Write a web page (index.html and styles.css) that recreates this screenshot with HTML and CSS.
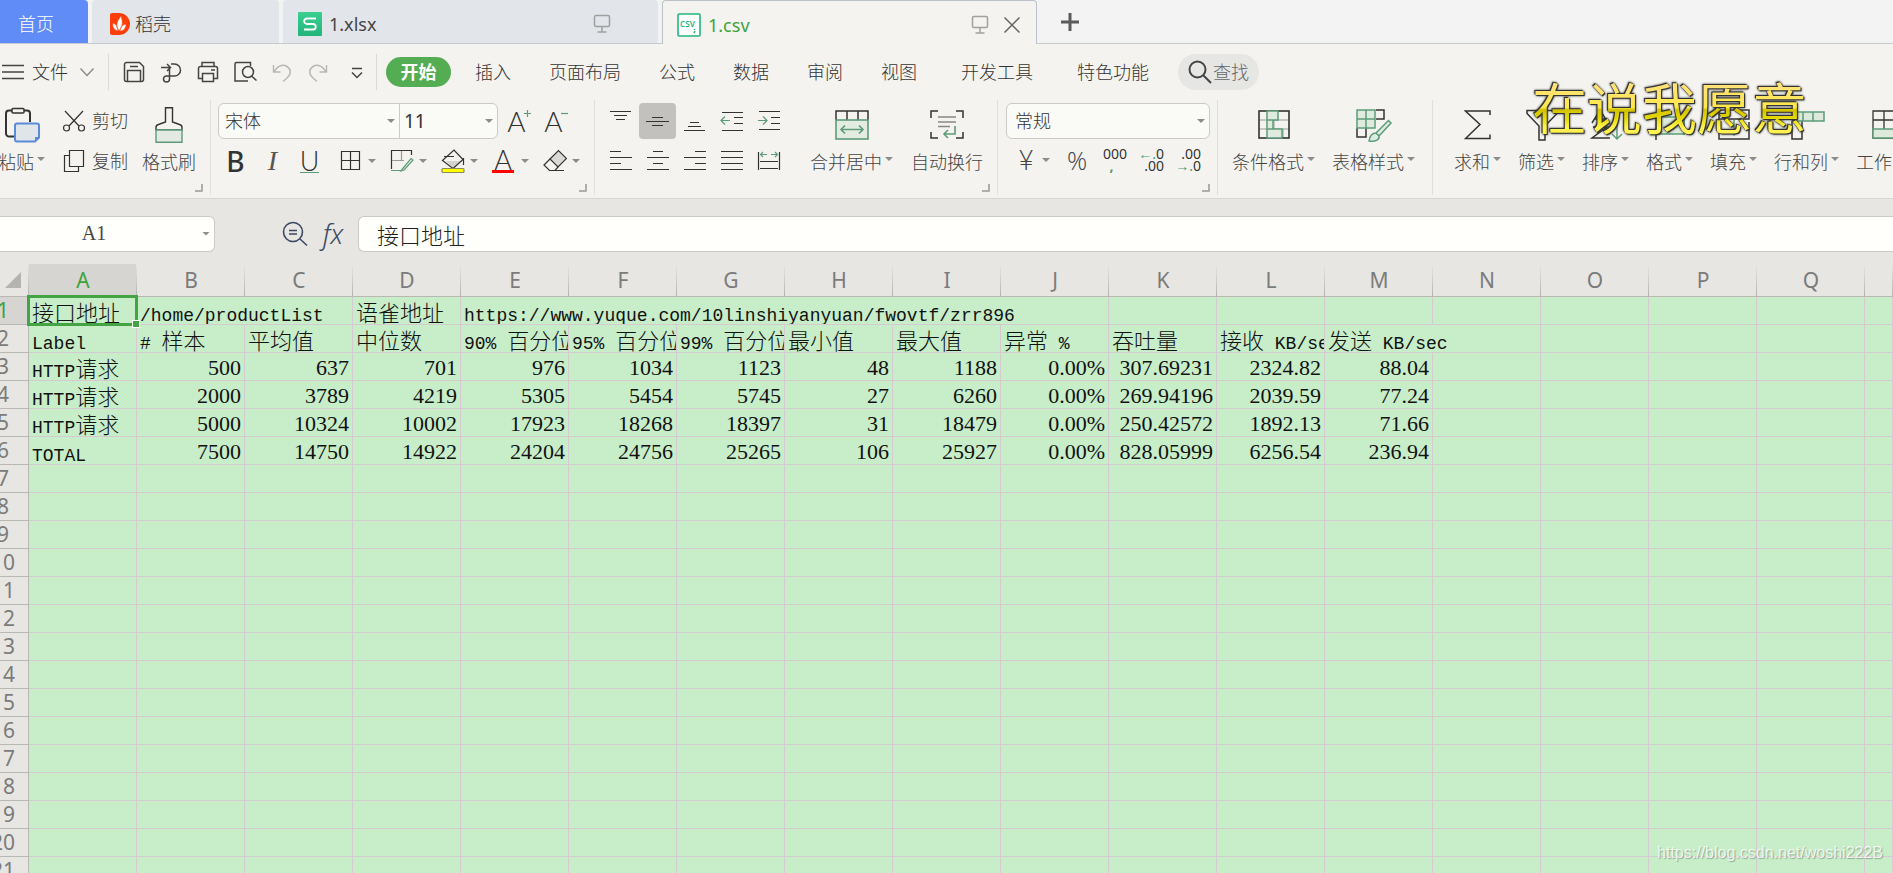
FILE: index.html
```html
<!DOCTYPE html>
<html lang="zh-CN">
<head>
<meta charset="utf-8">
<title>1.csv</title>
<link rel="stylesheet" href="styles.css">
</head>
<body>
<nav class="tabs">
  <button class="tab tab-home">首页</button>
  <button class="tab tab-docer">
    <svg width="20" height="24" viewBox="0 0 20 24"><path d="M0 3a2 2 0 0 1 2-2h7a11 11 0 0 1 0 22H2a2 2 0 0 1-2-2z" fill="#ff3f0a"/><path d="M9 19C5 14 7 9 11 4c2 6 2 10-2 15zM8 19c-4-1-6-4-5-8 3 1 5 4 5 8zM10 19c0-4 2-6 6-7 0 4-2 7-6 7z" fill="#fff" stroke="#ff3f0a" stroke-width=".6"/></svg>
    <span>稻壳</span>
  </button>
  <button class="tab tab-file">
    <svg width="24" height="24" viewBox="0 0 24 24"><defs><linearGradient id="gs" x2="0" y2="1"><stop stop-color="#3bcf92"/><stop offset="1" stop-color="#22b478"/></linearGradient></defs><rect width="24" height="24" rx="1" fill="url(#gs)"/><path d="M18 6.500H9a2.700 2.700 0 0 0 0 5.500h6a2.700 2.700 0 0 1 0 5.500H6" fill="none" stroke="#fff" stroke-width="1.800"/></svg>
    <span>1.xlsx</span>
    <svg class="screen" width="18" height="20" viewBox="0 0 18 20"><rect x="1.500" y="1.500" width="15" height="11" rx="1.500"/><path d="M9 13v5M4.500 18h9"/></svg>
  </button>
  <div class="tab tab-file tab-active">
    <svg width="24" height="24" viewBox="0 0 24 24"><rect x="1" y="1" width="22" height="22" rx="1" fill="#fff" stroke="#1fb87c" stroke-width="1.600"/><text x="3" y="14" class="csv-mark">csv</text><path d="M17.500 16v1M18 18l-1 2" stroke="#1fb87c" stroke-width="1.600"/></svg>
    <span>1.csv</span>
    <svg class="screen" width="18" height="20" viewBox="0 0 18 20"><rect x="1.500" y="1.500" width="15" height="11" rx="1.500"/><path d="M9 13v5M4.500 18h9"/></svg>
    <button class="close" aria-label="关闭"><svg width="18" height="18" viewBox="0 0 18 18"><path d="M1.500 1.500l15 15M16.500 1.500l-15 15" stroke="#666" stroke-width="1.500"/></svg></button>
  </div>
  <button class="tab-add" aria-label="新建"><svg width="18" height="18" viewBox="0 0 18 18"><path d="M9 0v18M0 9h18" stroke="#5b5b5b" stroke-width="3"/></svg></button>
</nav>

<div class="menu">
  <button class="file-btn">
    <svg width="24" height="18" viewBox="0 0 24 18"><path d="M2 2.500h22M2 9h22M2 15.500h22" stroke="#444" stroke-width="1.500"/></svg>
    <span>文件</span>
    <svg width="14" height="10" viewBox="0 0 14 10"><path d="M.5 1.500l6.500 7 6.500-7" stroke="#888" stroke-width="1.300" fill="none"/></svg>
  </button>
  <div class="quick">
    <button aria-label="保存"><svg width="24" height="24" viewBox="0 0 24 24"><path d="M2.500 4.500a2 2 0 0 1 2-2h13l4 4v13a2 2 0 0 1-2 2h-15a2 2 0 0 1-2-2zM5.500 21.500v-11h13v11M8 6.500h8"/></svg></button>
    <button aria-label="输出为PDF"><svg width="24" height="24" viewBox="0 0 24 24"><path d="M2 7.500h9M8 4l3.500 3.500L8 11M12 4h3.500a6 6 0 0 1 0 12H7.500a3 3 0 1 0 3 3V9"/></svg></button>
    <button aria-label="打印"><svg width="24" height="24" viewBox="0 0 24 24"><path d="M6 6.500v-4h12v4M6 18.500H2.500v-10a2 2 0 0 1 2-2h15a2 2 0 0 1 2 2v10H18M6.500 13.500h11v8h-11zM15 10h4"/></svg></button>
    <button aria-label="打印预览"><svg width="24" height="24" viewBox="0 0 24 24"><path d="M17.500 6V2.500h-14a1.500 1.500 0 0 0-1.500 1.500v17h13"/><circle cx="15" cy="12" r="5.500"/><path d="M18.500 16l5 4.500"/></svg></button>
    <button class="dim" aria-label="撤销"><svg width="24" height="24" viewBox="0 0 24 24"><path d="M3.500 5v7h7M4 12C8 5 13 4 17 6.500s4.500 7 .5 11L13 21.500"/></svg></button>
    <button class="dim" aria-label="恢复"><svg width="24" height="24" viewBox="0 0 24 24"><path d="M20.500 5v7h-7M20 12C16 5 11 4 7 6.500s-4.500 7-.5 11l4.500 4"/></svg></button>
    <button class="more" aria-label="更多"><svg width="24" height="24" viewBox="0 0 24 24"><path d="M7 8.500h10M7 12.500l5 5 5-5"/></svg></button>
  </div>
  <button class="menu-on">开始</button>
  <div class="menu-items">
    <button>插入</button><button>页面布局</button><button>公式</button><button>数据</button><button>审阅</button><button>视图</button><button class="wide">开发工具</button><button class="wide">特色功能</button>
  </div>
  <button class="find"><svg width="24" height="24" viewBox="0 0 24 24"><circle cx="9.500" cy="9.500" r="8" fill="none" stroke="#444" stroke-width="2"/><path d="M15.500 15.500l7.500 7.500" stroke="#444" stroke-width="2"/></svg><span>查找</span></button>
</div>

<div class="ribbon">
  <section class="group g-clip">
    <button class="big"><svg width="36" height="36" viewBox="0 0 36 36"><path d="M8 3.500H5a3 3 0 0 0-3 3v20a3 3 0 0 0 3 3h6M20 3.500h3a3 3 0 0 1 3 3V15" stroke="#333" stroke-width="2"/><rect x="8" y="1.500" width="12" height="4.500" rx="1" stroke="#333" stroke-width="1.500"/><path d="M13 16.500h20a2 2 0 0 1 2 2v12l-4 4H13a2 2 0 0 1-2-2v-14a2 2 0 0 1 2-2z" fill="#e0e5ea" stroke="#5a8bd8" stroke-width="2"/><path d="M35 30h-4v4z" fill="#5a8bd8"/></svg><span class="cap">粘贴<i class="caret"></i></span></button>
    <div class="stack">
      <button class="line"><svg width="24" height="24" viewBox="0 0 24 24"><circle cx="4.500" cy="19" r="3"/><circle cx="19.500" cy="19" r="3"/><path d="M3 2l14 15M21 2L7 17"/></svg>剪切</button>
      <button class="line"><svg width="24" height="24" viewBox="0 0 24 24"><path d="M7.500 1.500h14v16h-14zM7 6.500H2.500v16h14V18"/></svg>复制</button>
    </div>
    <button class="big"><svg width="28" height="36" viewBox="0 0 28 36"><path d="M10.500 15V.8h7V15l7 2.500a3 3 0 0 1 2.500 3V23H1v-2.500a3 3 0 0 1 2.500-3z" stroke="#333" stroke-width="1.400"/><path d="M1 23v12.200h26V23z" fill="#e4e9e3" stroke="#5c9c78" stroke-width="1.400"/></svg><span class="cap">格式刷</span></button>
    <svg class="corner" width="8" height="8"><path d="M7 0v7H0"/></svg>
  </section>

  <section class="group g-font">
    <div class="stack">
      <div class="row">
        <div class="combos">
          <label class="combo font-name"><select aria-label="字体"><option>宋体</option></select><i class="caret"></i></label>
          <label class="combo font-size"><select aria-label="字号"><option>11</option></select><i class="caret"></i></label>
        </div>
        <button class="tool grow" aria-label="增大字号"><span class="thin">A</span><svg width="8" height="22" viewBox="0 0 8 22"><path d="M0 3.500h7M3.500 0v7" class="gr"/></svg></button>
        <button class="tool grow" aria-label="减小字号"><span class="thin">A</span><svg width="8" height="22" viewBox="0 0 8 22"><path d="M0 3.500h7" class="gr"/></svg></button>
      </div>
      <div class="row">
        <button class="tool bold">B</button>
        <button class="tool italic">I</button>
        <button class="tool under"><span>U</span></button>
        <div class="splits">
          <button class="split" aria-label="边框"><svg width="24" height="24" viewBox="0 0 24 24"><path d="M2.500 2.500h18v18h-18zM11.500 2.500v18M2.500 11.500h18"/></svg><i class="caret"></i></button>
          <button class="split" aria-label="绘图边框"><svg width="24" height="24" viewBox="0 0 24 24"><path d="M1.500 20V1.500h20V6"/><path d="M11.500 2v10M2 11.500h12" class="pale"/><path d="M1 21.500h11M12 20.500l9-11 2 1.500-9 10-3 1z" class="gr"/></svg><i class="caret"></i></button>
          <button class="split" aria-label="填充颜色"><svg width="24" height="24" viewBox="0 0 24 24"><path d="M5 12h16l-8 8z" fill="#d5d3cf" stroke="none"/><path d="M1.500 11.500L13 1l9 9.500L12 19.500zM3 7.500h10M22.500 9v7"/><rect x="1" y="19.500" width="22" height="4" rx="1" fill="#ff0" stroke="#8b8b5e"/></svg><i class="caret"></i></button>
          <button class="split" aria-label="字体颜色"><span class="ink">A</span><i class="caret"></i></button>
          <button class="split" aria-label="清除"><svg width="24" height="24" viewBox="0 0 24 24"><path d="M7 10l8.500-8.500 8 8L15 18z" fill="#dcdad6"/><path d="M7 10l-6 6 5.500 5.500H12L15 18M6 21.500h15"/></svg><i class="caret"></i></button>
        </div>
      </div>
    </div>
    <svg class="corner" width="8" height="8"><path d="M7 0v7H0"/></svg>
  </section>

  <section class="group g-align">
    <div class="stack">
      <div class="row">
        <button class="tool" aria-label="顶端对齐"><svg width="24" height="24" viewBox="0 0 24 24"><path d="M1 2.500h21M5 6.500h13M7 10.500h9"/></svg></button>
        <button class="tool on" aria-label="垂直居中"><svg width="24" height="24" viewBox="0 0 24 24"><path d="M6 8.500h11M0 12.500h23M6 16.500h11"/></svg></button>
        <button class="tool" aria-label="底端对齐"><svg width="24" height="24" viewBox="0 0 24 24"><path d="M7 13.500h9M5 17.500h13M1 21.500h21"/></svg></button>
        <button class="tool" aria-label="减少缩进"><svg width="24" height="24" viewBox="0 0 24 24"><path d="M2 3.500h21M14 8.500h9M14 14.500h9M2 21.500h21"/><path d="M1 11.500h9M5 7.500l-4 4 4 4" class="gr"/></svg></button>
        <button class="tool" aria-label="增加缩进"><svg width="24" height="24" viewBox="0 0 24 24"><path d="M2 2.500h21M14 8.500h9M14 14.500h9M2 20.500h21"/><path d="M1 11.500h9M6 7.500l4 4-4 4" class="gr"/></svg></button>
      </div>
      <div class="row">
        <button class="tool" aria-label="左对齐"><svg width="24" height="24" viewBox="0 0 24 24"><path d="M1 2.500h11M1 8.500h22M1 14.500h11M1 20.500h22"/></svg></button>
        <button class="tool" aria-label="居中"><svg width="24" height="24" viewBox="0 0 24 24"><path d="M7 2.500h10M1 8.500h22M7 14.500h10M1 20.500h22"/></svg></button>
        <button class="tool" aria-label="右对齐"><svg width="24" height="24" viewBox="0 0 24 24"><path d="M12 2.500h11M1 8.500h22M12 14.500h11M1 20.500h22"/></svg></button>
        <button class="tool" aria-label="两端对齐"><svg width="24" height="24" viewBox="0 0 24 24"><path d="M1 2.500h22M1 8.500h22M1 14.500h22M1 20.500h22"/></svg></button>
        <button class="tool" aria-label="分散对齐"><svg width="24" height="24" viewBox="0 0 24 24"><path d="M1.500 3v18M22.500 3v18M3 12.500h18M3 19.500h18"/><path d="M4 5.500h6M6 3L3.500 5.500 6 8M14 5.500h6M18 3l2.500 2.500L18 8" class="gr"/></svg></button>
      </div>
    </div>
    <button class="big"><svg width="36" height="32" viewBox="0 0 36 32"><path d="M2 11V2h32v9M13 2v9M24 2v9" stroke="#333" stroke-width="1.500"/><rect x="2" y="11" width="32" height="19" fill="#e4ece2" stroke="#5c9c78" stroke-width="1.600"/><path d="M7 20.500h22M11 16.500l-4 4 4 4M25 16.500l4 4-4 4" stroke="#5c9c78" stroke-width="1.600"/></svg><span class="cap">合并居中<i class="caret"></i></span></button>
    <button class="big"><svg width="36" height="32" viewBox="0 0 36 32"><path d="M2 9V2h7M27 2h7v7M2 23v6h7M27 29h7v-6" stroke="#333" stroke-width="1.500"/><path d="M9 8h18M9 13h18M9 17.500h12" stroke="#888" stroke-width="1.500"/><path d="M26 17v8H15M19 21l-4 4 4 4" stroke="#5c9c78" stroke-width="1.600"/></svg><span class="cap">自动换行</span></button>
    <svg class="corner" width="8" height="8"><path d="M7 0v7H0"/></svg>
  </section>

  <section class="group g-num">
    <div class="stack">
      <div class="combos"><label class="combo num-format"><select aria-label="数字格式"><option>常规</option></select><i class="caret"></i></label></div>
      <div class="row">
        <button class="split money"><span>¥</span><i class="caret"></i></button>
        <button class="tool pct">%</button>
        <button class="tool digits" aria-label="千位分隔样式"><span>000</span><b>,</b></button>
        <button class="tool digits" aria-label="增加小数位数"><span><b>←.</b>0</span><span>.00</span></button>
        <button class="tool digits" aria-label="减少小数位数"><span>.00</span><span><b>→.</b>0</span></button>
      </div>
    </div>
    <svg class="corner" width="8" height="8"><path d="M7 0v7H0"/></svg>
  </section>

  <section class="group g-style">
    <button class="big"><svg width="34" height="32" viewBox="0 0 34 32"><path d="M2 11h30M2 20h30M17 2v27M26 20v9" stroke="#999"/><rect x="2" y="2" width="30" height="27" stroke="#333" stroke-width="1.600"/><path d="M10 2h11v9H10zM10 11h6v9h-6zM10 20h15v9H10z" fill="#e0ebdf" stroke="#5c9c78" stroke-width="1.500"/></svg><span class="cap">条件格式<i class="caret"></i></span></button>
    <button class="big"><svg width="38" height="36" viewBox="0 0 38 36"><path d="M21 3h8v9h-8M2 21v9h9v-9" stroke="#333" stroke-width="1.500"/><path d="M2 3h18v18H2zM11 3v18M2 12h18" fill="#e0ebdf" stroke="#5c9c78" stroke-width="1.500"/><path d="M21 26l12.500-12.500 2.500 2.500L24 29M14 34c1-6 3-8 7-8l3 3c1 4-4 6-10 5z" fill="#e0ebdf" stroke="#5c9c78" stroke-width="1.500"/></svg><span class="cap">表格样式<i class="caret"></i></span></button>
  </section>

  <section class="group g-edit">
    <button class="big"><svg width="28" height="32" viewBox="0 0 28 32"><path d="M26 6V2H1.500L16 15.500 1.500 29.500H26v-4" stroke="#333" stroke-width="1.500"/></svg><span class="cap">求和<i class="caret"></i></span></button>
    <button class="big"><svg width="34" height="34" viewBox="0 0 34 34"><path d="M2 2.500h30v3L20 18v14h-6V18L2 5.500z" stroke="#333" stroke-width="1.500"/></svg><span class="cap">筛选<i class="caret"></i></span></button>
    <button class="big"><svg width="34" height="34" viewBox="0 0 34 34"><path d="M3 15L11 2l8 13M6 11h10M4 19h14L3 30h18" stroke="#333" stroke-width="1.500"/><path d="M28 2v29M23 26l5 5 5-5" stroke="#5c9c78" stroke-width="1.500"/></svg><span class="cap">排序<i class="caret"></i></span></button>
    <button class="big"><svg width="34" height="34" viewBox="0 0 34 34"><path d="M3 5v27M31 5v22" stroke="#333" stroke-width="1.500"/><path d="M3 9h28v17H3z" fill="#dce9db" stroke="#5c9c78" stroke-width="1.500"/></svg><span class="cap">格式<i class="caret"></i></span></button>
    <button class="big"><svg width="34" height="34" viewBox="0 0 34 34"><path d="M2 2h30v9H2zM2 14v17h30V14" stroke="#333" stroke-width="1.500"/><path d="M17 12v15M12 22l5 5 5-5" stroke="#5c9c78" stroke-width="1.500"/></svg><span class="cap">填充<i class="caret"></i></span></button>
    <button class="big"><svg width="36" height="34" viewBox="0 0 36 34"><path d="M3 13v18h10V13" stroke="#333" stroke-width="1.500"/><path d="M3 4h32v9H3zM14 4v9M24 4v9" fill="#dce9db" stroke="#5c9c78" stroke-width="1.500"/></svg><span class="cap">行和列<i class="caret"></i></span></button>
    <button class="big"><svg width="36" height="32" viewBox="0 0 36 32"><path d="M2 2h32v27H2zM13 2v18M24 2v18M2 11h32" stroke="#333" stroke-width="1.300"/><path d="M2 20h32v9H2z" fill="#dce9db" stroke="#5c9c78" stroke-width="1.500"/></svg><span class="cap">工作表<i class="caret"></i></span></button>
  </section>
</div>

<div class="formula">
  <label class="name-box"><input aria-label="名称框" value="A1"><i class="caret"></i></label>
  <button class="lens" aria-label="浏览公式"><svg width="26" height="26" viewBox="0 0 26 26"><circle cx="11" cy="11" r="9.500" fill="none" stroke="#3d4963" stroke-width="1.600"/><path d="M18 18l7 6.500M7 9.500h8M7 13h8" stroke="#3d4963" stroke-width="1.600"/></svg></button>
  <button class="fx">fx</button>
  <input class="entry" aria-label="编辑栏" value="接口地址">
</div>

<main class="sheet"><table class="grid" id="grid"></table></main>

<div class="caption">在说我愿意</div>
<div class="mark">https://blog.csdn.net/woshi222B</div>
<script src="script.js"></script>
</body>
</html>
```
FILE: styles.css
```css
* { box-sizing: border-box; }
body {
  margin: 0;
  height: 100vh;
  overflow: hidden;
  position: relative;
  display: flex;
  flex-direction: column;
  background: #f4f3ef;
  color: #333;
  font: 300 18px/24px "Noto Sans", "Noto Sans CJK SC", sans-serif;
}
button, input, select { font: inherit; color: inherit; border: 0; background: none; padding: 0; margin: 0; }
button { display: flex; align-items: center; justify-content: center; white-space: nowrap; flex: none; }
svg { display: block; flex: none; fill: none; }

/* document tabs */
.tabs { display: flex; height: 44px; flex: none; gap: 4px; background: #f3f3f3; border-bottom: 1px solid #c5cad0; }
.tab { display: flex; align-items: center; justify-content: flex-start; height: 43px; border-radius: 4px 4px 0 0; background: #e2e5ea; padding: 5px 15px 0; }
.tab-home { width: 88px; background: #5f8cf6; color: #fff; padding-left: 18px; border-radius: 0 4px 0 0; }
.tab-docer { width: 187px; padding-left: 18px; gap: 5px; }
.tab-file { width: 375px; gap: 7px; font-weight: 400; color: #444; }
.screen { margin-left: auto; margin-right: 32px; stroke: #a0a0a0; stroke-width: 1.5px; }
.tab-active { height: 44px; background: #f4f3ef; color: #3ea33e; border: 1px solid #bcc2cc; border-bottom: 0; padding-left: 14px; padding-top: 4px; }
.tab-active .screen { margin-right: 7px; }
.csv-mark { font: 500 10px "Noto Sans", sans-serif; fill: #1fb87c; }
.tab-add { width: 58px; height: 43px; padding-bottom: 0; }

/* menu row */
.menu { display: flex; align-items: center; height: 56px; flex: none; }
.file-btn { gap: 8px; width: 109px; height: 36px; border-right: 1px solid #dcdbd8; justify-content: flex-start; }
.file-btn svg + span { margin-right: 4px; }
.quick { display: flex; gap: 13px; padding: 0 7px 0 13px; height: 36px; border-right: 1px solid #dcdbd8; align-items: center; }
.quick svg { stroke: #444; stroke-width: 1.5px; }
.quick .dim svg { stroke: #b8b8b6; }
.quick .dim + .dim { margin-left: -1px; }
.quick .more { margin-left: 2px; }
.menu-on { width: 65px; height: 30px; border-radius: 15px; background: #54ad53; color: #fff; font-weight: 700; margin-left: 9px; }
.menu-items { display: flex; gap: 38px; margin-left: 24px; }
.menu-items .wide { margin-left: 6px; }
.find { width: 81px; height: 36px; border-radius: 18px; background: #e6e6e4; margin-left: 29px; gap: 1px; color: #666; }

/* ribbon */
.ribbon { display: flex; height: 99px; flex: none; border-bottom: 1px solid #d6d6d2; overflow: hidden; color: #444; }
.group { display: flex; flex: none; position: relative; height: 95px; padding-top: 3px; border-right: 1px solid #e0dfdc; }
.g-clip { margin-left: -2px; padding-right: 14px; }
.g-font { padding-left: 6px; }
.g-align { padding-left: 7px; padding-right: 14px; }
.g-num { padding-left: 7px; padding-right: 7px; }
.g-style { padding-left: 14px; padding-right: 17px; gap: 17px; }
.g-edit { padding-left: 21px; gap: 17px; border-right: 0; }
.big { flex-direction: column; height: 74px; }
.big > svg { margin: auto; }
.cap { display: flex; height: 30px; align-items: center; gap: 3px; }
.caret { flex: none; width: 8px; height: 4px; background: #8c8c8c; clip-path: polygon(0 0, 100% 0, 50% 100%); }
.cap .caret { margin-bottom: 6px; }
.stack { display: flex; flex-direction: column; gap: 4px; }
.g-clip .stack { margin: 0 14px 0 17px; }
.line { height: 36px; gap: 6px; }
.line svg, .tool svg, .split svg { stroke: #333; stroke-width: 1.2px; }
svg .gr { stroke: #5c9c78; }
svg .pale { stroke: #999; }
.corner { position: absolute; right: 7px; top: 84px; stroke: #999; stroke-width: 1.5px; }
.row { display: flex; height: 36px; align-items: center; }
.combos { display: flex; height: 36px; border: 1px solid #cbcac6; border-radius: 6px; background: #fafaf7; margin-left: 1px; }
.combo { display: flex; align-items: center; padding-right: 4px; }
.combo select { appearance: none; flex: 1; min-width: 0; height: 32px; padding-left: 6px; outline: 0; color: #333; }
.font-name { width: 181px; border-right: 1px solid #cbcac6; }
.font-size { width: 97px; }
.font-size select { padding-left: 4px; font-size: 19px; font-weight: 400; }
.num-format { width: 202px; }
.num-format select { padding-left: 8px; }
.tool { width: 37px; height: 36px; border-radius: 4px; }
.on { background: #c3c1bd; }
.combos + .grow { margin-left: 3px; }
.thin, .ink { font: 300 28px/32px Lato, "Open Sans", sans-serif; color: #333; }
.grow svg { margin-left: -2px; }
.thin { font-size: 28px; }
.bold { font: 500 28px/36px "Noto Sans", sans-serif; color: #333; }
.italic { font: italic 300 28px/36px "Liberation Serif", serif; color: #555; }
.under { font: 300 27px/23px Lato, sans-serif; color: #333; }
.under span { border-bottom: 1px solid #5c9c78; }
.splits { display: flex; margin-left: 11px; }
.split { width: 51px; gap: 5px; justify-content: flex-start; }
.ink { width: 22px; height: 24px; margin-right: 2px; line-height: 22px; font-size: 27px; border-bottom: 3px solid #f00; }
.g-align .big { margin-left: 18px; }
.g-align .stack + .big { margin-left: 23px; }
.g-num .row { height: 34px; }
.money { width: 43px; margin-left: 10px; gap: 5px; }
.money span { font: 300 27px/36px Lato, "Noto Sans", sans-serif; width: 22px; }
.pct { width: 38px; font: 300 25px/36px "Open Sans", sans-serif; }
.digits { width: 37px; flex-direction: column; align-items: flex-end; font: 400 14px/12px "Noto Sans", sans-serif; color: #333; padding-right: 6px; }
.digits b { color: #4c9a6c; font-weight: 400; }
.digits > b { align-self: center; font-weight: 700; }

/* formula bar */
.formula { display: flex; align-items: center; height: 65px; flex: none; background: #e7e6e2; padding-top: 4px; color: #222; }
.name-box { display: flex; align-items: center; width: 215px; height: 36px; background: #fffffc; border: 1px solid #cbcac6; border-left: 0; border-radius: 0 6px 6px 0; padding-right: 4px; }
.name-box input { flex: 1; min-width: 0; text-align: center; padding-right: 14px; font: 20px "Liberation Serif", serif; color: #444; }
.lens { margin-left: 67px; }
.fx { width: 50px; font: italic 300 27px/36px "Noto Sans", sans-serif; color: #3d4963; }
.entry { flex: 1; min-width: 0; height: 36px; background: #fffffc; border: 1px solid #cbcac6; border-right: 0; border-radius: 6px 0 0 6px; padding-left: 18px; font-size: 22px; }

/* sheet, scrolled so that the row numbers are partly out of view */
.sheet { flex: 1; min-height: 0; overflow: hidden; background: #c7edc9; }
.grid { table-layout: fixed; width: calc(100% + 20px); margin-left: -20px; border-collapse: separate; border-spacing: 0; color: #111; }
.col-head { width: 49px; }
.col { width: 108px; }
.grid th { height: 28px; padding: 0; font: 400 21px/27px "Noto Sans", sans-serif; color: #7b7b7b; background: #e7e6e2; border-right: 1px solid #b9b8b5; border-bottom: 1px solid #b9b8b5; }
.grid thead th { height: 33px; line-height: 32px; border-right: 0; background: linear-gradient(#e7e6e2, #b4b3b0) right / 1px 100% no-repeat #e7e6e2; }
.grid thead .picked { background-color: #d6d5d1; color: #3ea33e; }
.grid tbody .picked { background: #d6d5d1; color: #3ea33e; }
.grid tbody th { padding-right: 2px; }
.corner-cell svg { margin-left: 25px; }
.grid td { height: 28px; padding: 0; position: relative; border-right: 1px solid #d6cad2; border-bottom: 1px solid #d6cad2; }
.cell { height: 27px; overflow: hidden; white-space: pre; padding-left: 3px; font: 300 22px/28px "Noto Sans CJK SC", sans-serif; }
.latin { font: 18px/20px "Liberation Mono", monospace; }
.num { text-align: right; padding: 0 3px; font: 22px/30px "Liberation Serif", serif; }
.grid .selected::after { content: ""; position: absolute; inset: -2px; border: 3px solid #44a444; }
.grid .selected::before { content: ""; position: absolute; z-index: 1; right: -3px; bottom: -3px; width: 6px; height: 6px; background: #44a444; outline: 1px solid #fff; }

/* overlays */
.caption { position: absolute; left: 1532px; top: 65px; font: 400 55px/80px "Noto Sans CJK SC", sans-serif; color: transparent; background: linear-gradient(#ffe27a 25%, #fce84a 53%, #d2c200 56%, #e6d800 66%, #fff250 78%); background-clip: text; -webkit-background-clip: text; filter: drop-shadow(1px 1px 0 #333) drop-shadow(-1px -1px 0 #333) drop-shadow(0 0 1px #333); }
.mark { position: absolute; right: 10px; bottom: 10px; font: 16px/20px "Liberation Sans", sans-serif; color: rgba(255, 255, 255, .8); text-shadow: 1px 1px 1px rgba(90, 110, 90, .5); }
```
FILE: script.js
```js
const letters = "ABCDEFGHIJKLMNOPQR".split("");
const rows = [
  ["接口地址", { t: "/home/productList", span: 2 }, "语雀地址", { t: "https://www.yuque.com/10linshiyanyuan/fwovtf/zrr896", span: 6 }],
  ["Label", "# 样本", "平均值", "中位数", "90% 百分位", "95% 百分位", "99% 百分位", "最小值", "最大值", "异常 %", "吞吐量", "接收 KB/sec", { t: "发送 KB/sec", span: 2 }],
  ["HTTP请求", 500, 637, 701, 976, 1034, 1123, 48, 1188, "0.00%", "307.69231", "2324.82", "88.04"],
  ["HTTP请求", 2000, 3789, 4219, 5305, 5454, 5745, 27, 6260, "0.00%", "269.94196", "2039.59", "77.24"],
  ["HTTP请求", 5000, 10324, 10002, 17923, 18268, 18397, 31, 18479, "0.00%", "250.42572", "1892.13", "71.66"],
  ["TOTAL", 7500, 14750, 14922, 24204, 24756, 25265, 106, 25927, "0.00%", "828.05999", "6256.54", "236.94"]
];
const rowCount = 21;

function content(value) {
  const text = String(value);
  if (/^[\d.]+%?$/.test(text)) return `<div class="cell num">${text}</div>`;
  const html = text.replace(/[\x20-\x7e]+/g, run => `<span class="latin">${run}</span>`);
  return `<div class="cell">${html}</div>`;
}

let html = '<colgroup><col class="col-head">' + letters.slice(0, -1).map(() => '<col class="col">').join("") + "<col></colgroup>";
html += '<thead><tr><th class="corner-cell"><svg width="16" height="16"><path d="M16 0v16H0z" fill="#b5b4b1"/></svg></th>';
letters.forEach((letter, i) => {
  html += `<th class="${i === 0 ? "picked" : ""}">${i < 17 ? letter : ""}</th>`;
});
html += "</tr></thead><tbody>";
for (let r = 0; r < rowCount; r++) {
  html += `<tr><th class="${r === 0 ? "picked" : ""}">${r + 1}</th>`;
  const cells = rows[r] || [];
  let used = 0;
  for (let c = 0; used < letters.length; c++) {
    const cell = cells[c];
    const span = cell && cell.span ? cell.span : 1;
    const value = cell && cell.t ? cell.t : cell;
    html += `<td colspan="${span}"${r === 0 && c === 0 ? ' class="selected"' : ""}>${value === undefined ? "" : content(value)}</td>`;
    used += span;
  }
  html += "</tr>";
}
document.getElementById("grid").innerHTML = html + "</tbody>";
```
